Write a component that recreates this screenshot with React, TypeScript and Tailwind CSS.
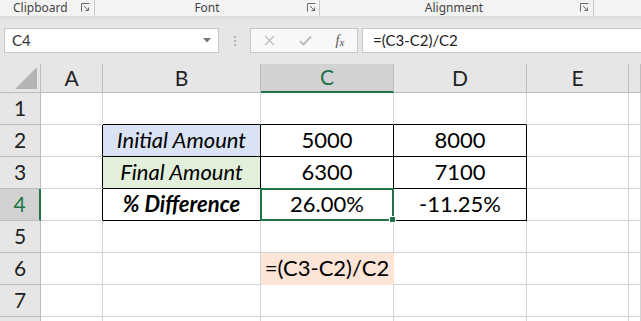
import React from 'react';

type Cell = {
  text?: string;
  italic?: boolean;
  bold?: boolean;
  bg?: string;
};

const COLS = ['A', 'B', 'C', 'D', 'E', ''];

const ROWS: Record<number, Record<string, Cell>> = {
  2: {
    B: { text: 'Initial Amount', italic: true, bg: 'bg-[#dae3f3]' },
    C: { text: '5000' },
    D: { text: '8000' },
  },
  3: {
    B: { text: 'Final Amount', italic: true, bg: 'bg-[#e2efda]' },
    C: { text: '6300' },
    D: { text: '7100' },
  },
  4: {
    B: { text: '% Difference', italic: true, bold: true },
    C: { text: '26.00%' },
    D: { text: '-11.25%' },
  },
  6: {
    C: { text: '=(C3-C2)/C2', bg: 'bg-[#fce4d6]' },
  },
};

function Launcher() {
  return (
    <svg width="9" height="9" viewBox="0 0 9 9" className="shrink-0 mt-[3px]">
      <path d="M0.5 8.5V0.5H8.5" fill="none" stroke="#6a6a6a" strokeWidth="1" />
      <path d="M3 3L7.5 7.5M7.5 4.5V7.5H4.5" fill="none" stroke="#6a6a6a" strokeWidth="1" />
    </svg>
  );
}

function RibbonLabels() {
  return (
    <div className="h-[16px] bg-[#f3f3f3] flex items-start text-[12px] leading-[16px] text-[#444] font-['Noto_Sans',sans-serif]">
      <div className="w-[95px] h-[16px] flex items-start pl-[13px] pr-[4px] border-r border-[#c8c8c8]">
        <span className="flex-1">Clipboard</span>
        <Launcher />
      </div>
      <div className="w-[225px] h-[16px] flex items-start pr-[3px] border-r border-[#c8c8c8]">
        <span className="flex-1 text-center pl-[12px]">Font</span>
        <Launcher />
      </div>
      <div className="w-[274px] h-[16px] flex items-start pr-[4px] border-r border-[#c8c8c8]">
        <span className="flex-1 text-center pl-[8px]">Alignment</span>
        <Launcher />
      </div>
    </div>
  );
}

function FormulaBar() {
  return (
    <div className="h-[48px] bg-[#e6e6e6] bg-gradient-to-b from-[#dcdcdc] to-[#e6e6e6] bg-[length:100%_5px] bg-no-repeat pt-[12px] flex items-start">
      <div className="ml-[4px] w-[215px] h-[25px] bg-white border border-[#c6c6c6] flex items-center pl-[7px] pr-[7px] font-['Lato',sans-serif] text-[15px] text-[#333]">
        <span className="flex-1">C4</span>
        <svg width="8" height="5" viewBox="0 0 8 5">
          <path d="M0 0H8L4 4.5Z" fill="#777" />
        </svg>
      </div>
      <div className="w-[31px] h-[25px] flex flex-col items-center justify-center gap-[2px]">
        <span className="w-[2px] h-[2px] bg-[#b4b4b4]" />
        <span className="w-[2px] h-[2px] bg-[#b4b4b4]" />
        <span className="w-[2px] h-[2px] bg-[#b4b4b4]" />
      </div>
      <div className="w-[108px] h-[25px] bg-[#f8f8f8] border border-[#c6c6c6] flex items-center">
        <div className="w-[36px] flex justify-center">
          <svg width="11" height="11" viewBox="0 0 11 11">
            <path d="M1 1L10 10M10 1L1 10" stroke="#bdbdbd" strokeWidth="1.3" />
          </svg>
        </div>
        <div className="w-[36px] flex justify-center">
          <svg width="13" height="11" viewBox="0 0 13 11">
            <path d="M1 6L4.5 9.5L12 1.5" fill="none" stroke="#bdbdbd" strokeWidth="2" />
          </svg>
        </div>
        <div className="w-[34px] flex justify-center font-['Liberation_Serif',serif] italic text-[14px] text-[#555] leading-none">
          <span>f</span>
          <span className="text-[11px] mt-[3px]">x</span>
        </div>
      </div>
      <div className="ml-[4px] flex-1 h-[25px] bg-white border border-[#c6c6c6] border-r-0 flex items-center pl-[10px] font-['Lato',sans-serif] text-[15px] text-[#222]">
        =(C3-C2)/C2
      </div>
    </div>
  );
}

function headerCls(active: boolean) {
  return active
    ? 'bg-[#d2d2d2] text-[#217346] border-r border-[#bdbdbd] border-b-2 border-b-[#217346]'
    : 'bg-[#e6e6e6] text-[#222] border-r border-[#bdbdbd] border-b border-b-[#bdbdbd]';
}

function Sheet() {
  const rows = [1, 2, 3, 4, 5, 6, 7, 8];
  return (
    <div className="grid grid-cols-[41px_62px_158px_133px_133px_102px_12px] grid-rows-[29px_repeat(8,32px)] font-['Lato',sans-serif]">
      {/* corner */}
      <div className="bg-[#e6e6e6] border-r border-b border-[#bdbdbd] relative">
        <svg width="22" height="22" viewBox="0 0 22 22" className="absolute right-[3px] bottom-[3px]">
          <path d="M22 0V22H0Z" fill="#b4b4b4" />
        </svg>
      </div>
      {COLS.map((c, i) => (
        <div
          key={'h' + i}
          className={`flex items-end justify-center pb-[2px] text-[21px] leading-[24px] ${headerCls(c === 'C')}`}
        >
          {c}
        </div>
      ))}

      {rows.map((r) => (
        <React.Fragment key={r}>
          <div
            className={
              r === 4
                ? 'bg-[#d2d2d2] text-[#217346] border-r-2 border-r-[#217346] border-b border-b-[#bdbdbd] flex items-end justify-center pb-[4px] text-[21px] leading-[24px]'
                : 'bg-[#e6e6e6] text-[#222] border-r border-r-[#bdbdbd] border-b border-b-[#bdbdbd] flex items-end justify-center pb-[4px] text-[21px] leading-[24px]'
            }
          >
            {r < 8 ? r : ''}
          </div>
          {COLS.map((c, i) => {
            const cell: Cell = (ROWS[r] && ROWS[r][c]) || {};
            const inTable = r >= 2 && r <= 4 && (c === 'B' || c === 'C' || c === 'D');
            const aboveTable = r === 1 && (c === 'B' || c === 'C' || c === 'D');
            const leftOfTable = r >= 2 && r <= 4 && c === 'A';
            const peach = r === 6 && c === 'C';
            let border = 'border-r border-b border-[#d4d4d4]';
            if (inTable) border = 'border-r border-b border-black';
            else if (aboveTable) border = 'border-r border-r-[#d4d4d4] border-b border-b-black';
            else if (leftOfTable) border = 'border-r border-r-black border-b border-b-[#d4d4d4]';
            else if (peach) border = 'border-r border-b border-[#fce4d6]';
            const selected = r === 4 && c === 'C';
            return (
              <div
                key={r + '-' + i}
                className={`relative flex items-end justify-center pb-[3px] text-[22px] leading-[26px] text-black ${border} ${cell.bg || 'bg-white'} ${cell.italic ? 'italic' : ''} ${cell.bold ? 'font-bold' : ''}`}
              >
                {cell.text}
                {selected && (
                  <div className="absolute -left-[1px] -top-[1px] -right-[1px] -bottom-[1px] border-2 border-[#217346] z-10">
                    <div className="absolute -right-[4px] -bottom-[4px] w-[7px] h-[7px] bg-[#217346] border border-white" />
                  </div>
                )}
              </div>
            );
          })}
        </React.Fragment>
      ))}
    </div>
  );
}

export default function App() {
  return (
    <div className="w-[641px] h-[321px] overflow-hidden bg-white">
      <RibbonLabels />
      <FormulaBar />
      <Sheet />
    </div>
  );
}
